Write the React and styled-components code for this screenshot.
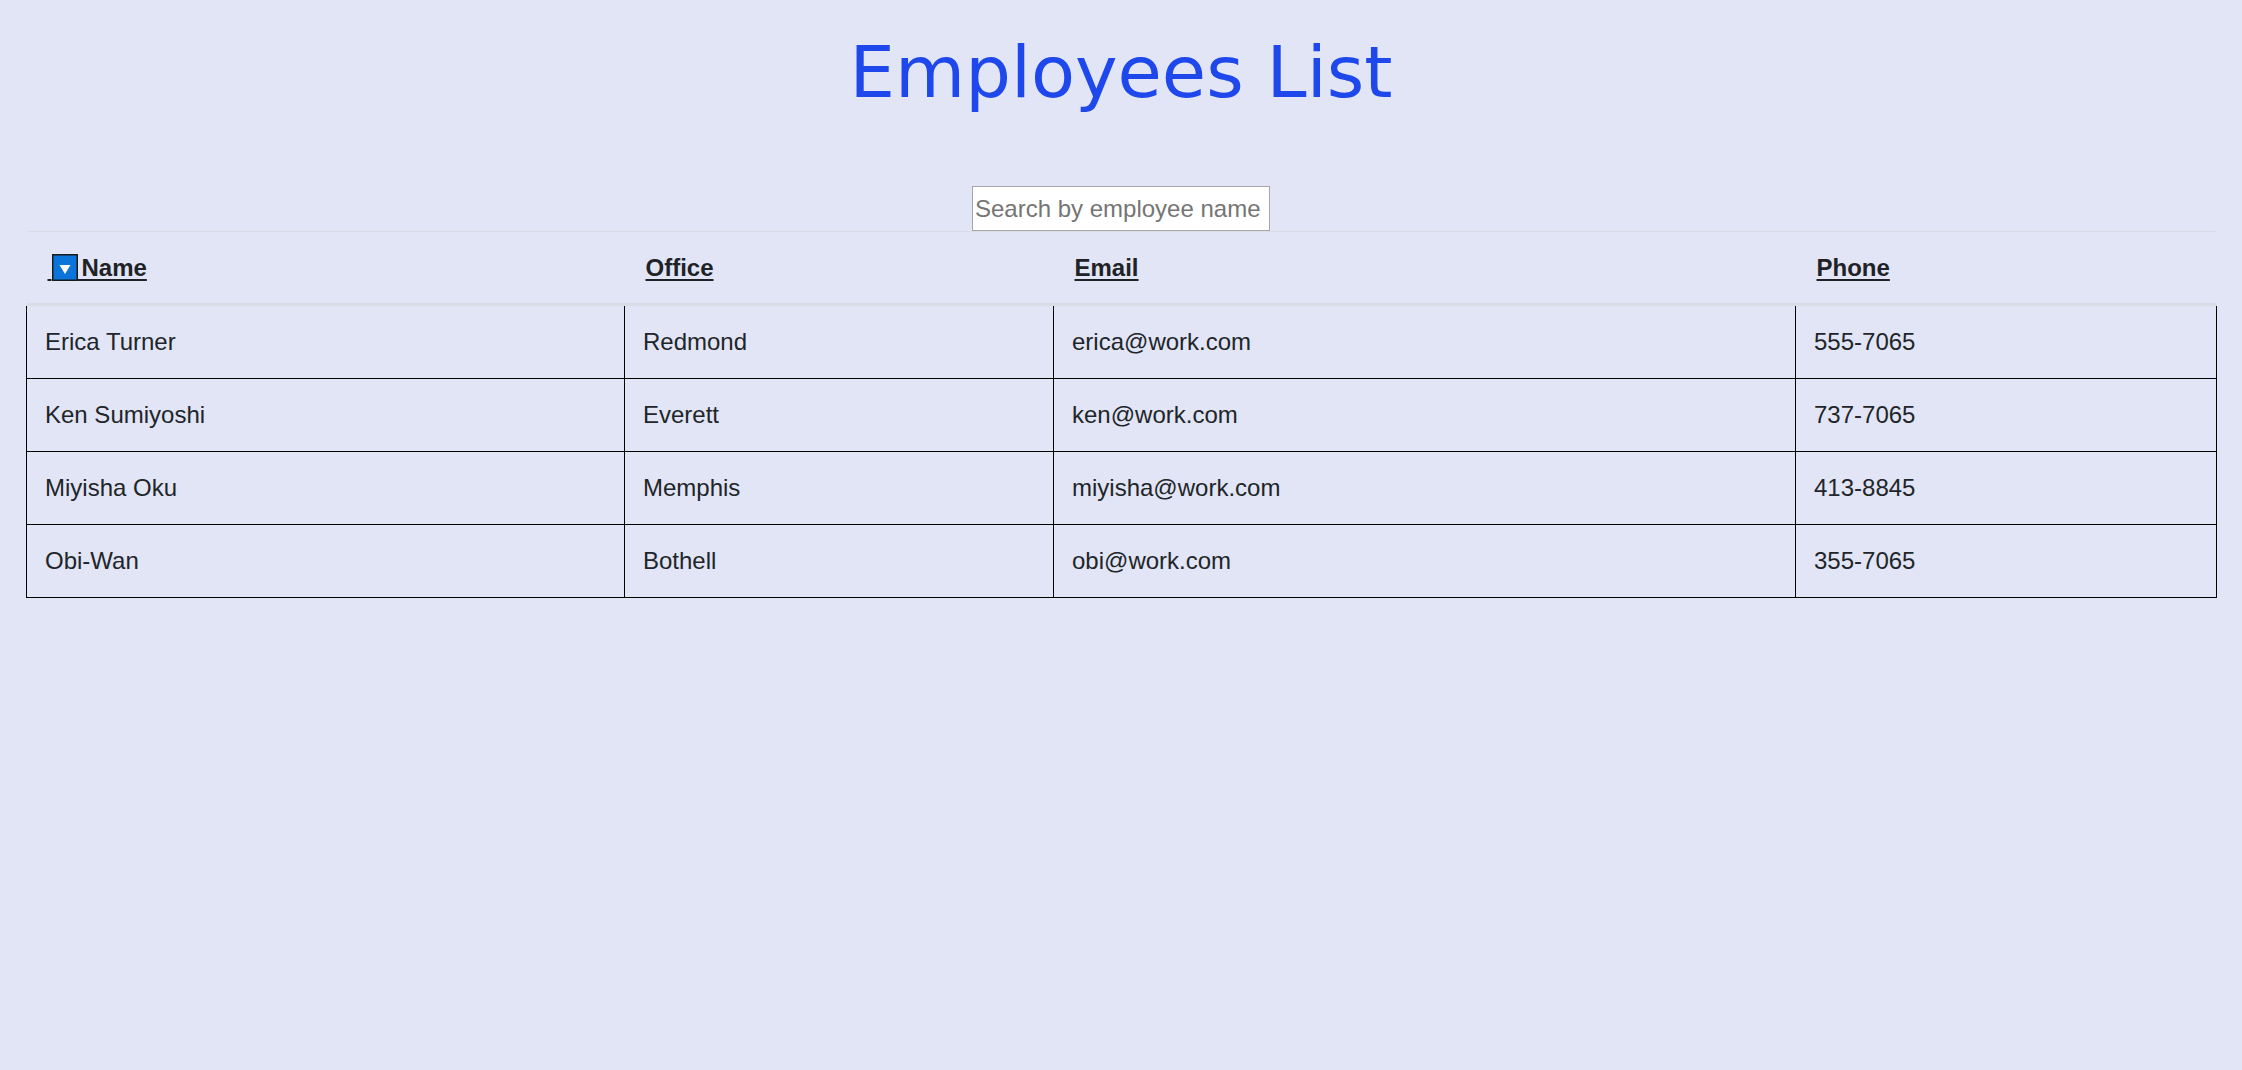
import React from "react";
import styled, { createGlobalStyle } from "styled-components";

const GlobalStyle = createGlobalStyle`
  html, body {
    margin: 0;
    padding: 0;
    background: #e1e5f5;
  }
  body {
    font-family: "Liberation Sans", Arial, sans-serif;
    color: #212529;
  }
`;

const Page = styled.div`
  padding: 0 26px;
  min-height: 1070px;
  box-sizing: border-box;
`;

const Title = styled.h1`
  margin: 30px 0 0;
  text-align: center;
  font-family: "DejaVu Sans", Verdana, sans-serif;
  font-weight: normal;
  font-size: 72px;
  line-height: 84px;
  color: #1e47ec;
`;

const SearchRow = styled.div`
  display: flex;
  justify-content: center;
  margin-top: 72px;
`;

const SearchInput = styled.input`
  box-sizing: border-box;
  width: 298px;
  height: 45px;
  padding: 1px 2px;
  border: 1px solid #a6a6a6;
  border-radius: 0;
  background: #fff;
  font-family: "Liberation Sans", Arial, sans-serif;
  font-size: 24px;
  color: #212529;
  outline: none;
  &::placeholder {
    color: #757575;
  }
`;

const Table = styled.table`
  width: 100%;
  border-collapse: collapse;
  table-layout: fixed;
  font-family: "Liberation Sans", Arial, sans-serif;
  font-size: 24px;
  line-height: 36px;
  color: #212529;
`;

const HeadCell = styled.th`
  text-align: left;
  font-weight: bold;
  padding: 18px 18px 17px 21px;
  border-top: 1px solid #d9dde6;
  border-bottom: 3px solid #d9dde6;
  vertical-align: bottom;
`;

const SortLink = styled.a`
  color: #1f2226;
  text-decoration: underline;
  text-decoration-thickness: 2px;
  text-underline-offset: 3px;
  cursor: pointer;
`;

const SortIconWrap = styled.svg`
  display: inline-block;
  vertical-align: -5px;
`;

const BodyCell = styled.td`
  padding: 18px;
  border: 1px solid #000;
  vertical-align: middle;
`;

const SortIcon = () => (
  <SortIconWrap width="26" height="27" viewBox="0 0 26 27">
    <rect x="0.75" y="0.75" width="24.5" height="25.5" fill="#0a74da" stroke="#1a1a1a" strokeWidth="1.5" />
    <polygon points="7.5,11 18.5,11 13,20" fill="#ffffff" />
  </SortIconWrap>
);

const employees = [
  { name: "Erica Turner", office: "Redmond", email: "erica@work.com", phone: "555-7065" },
  { name: "Ken Sumiyoshi", office: "Everett", email: "ken@work.com", phone: "737-7065" },
  { name: "Miyisha Oku", office: "Memphis", email: "miyisha@work.com", phone: "413-8845" },
  { name: "Obi-Wan", office: "Bothell", email: "obi@work.com", phone: "355-7065" },
];

export default function App() {
  return (
    <>
      <GlobalStyle />
      <Page>
        <Title>Employees List</Title>
        <SearchRow>
          <SearchInput placeholder="Search by employee name" />
        </SearchRow>
        <Table>
          <colgroup>
            <col style={{ width: "598px" }} />
            <col style={{ width: "429px" }} />
            <col style={{ width: "742px" }} />
            <col style={{ width: "421px" }} />
          </colgroup>
          <thead>
            <tr>
              <HeadCell>
                <SortLink>
                  {"\u2006"}
                  <SortIcon />
                  {"\u2006Name"}
                </SortLink>
              </HeadCell>
              <HeadCell>
                <SortLink>Office</SortLink>
              </HeadCell>
              <HeadCell>
                <SortLink>Email</SortLink>
              </HeadCell>
              <HeadCell>
                <SortLink>Phone</SortLink>
              </HeadCell>
            </tr>
          </thead>
          <tbody>
            {employees.map((e) => (
              <tr key={e.email}>
                <BodyCell>{e.name}</BodyCell>
                <BodyCell>{e.office}</BodyCell>
                <BodyCell>{e.email}</BodyCell>
                <BodyCell>{e.phone}</BodyCell>
              </tr>
            ))}
          </tbody>
        </Table>
      </Page>
    </>
  );
}
